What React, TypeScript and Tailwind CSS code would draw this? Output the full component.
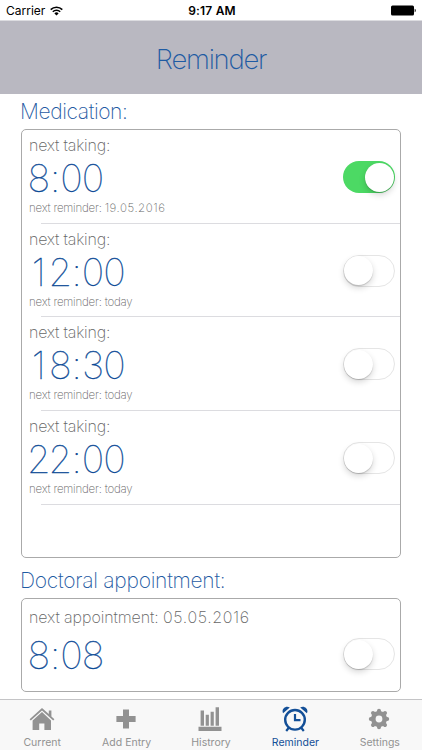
import { useState } from "react";

type Reminder = {
  time: string;
  next: string;
  enabled: boolean;
};

const reminders: Reminder[] = [
  { time: "8:00", next: "19.05.2016", enabled: true },
  { time: "12:00", next: "today", enabled: false },
  { time: "18:30", next: "today", enabled: false },
  { time: "22:00", next: "today", enabled: false },
];

const HomeIcon = () => (
  <svg width="26" height="24" viewBox="0 0 26 24" fill="currentColor">
    <path d="M13 1 0.6 12.2l1.2 1.3L13 3.4l11.2 10.1 1.2-1.3-3-2.7V3.4h-2.6v3.7z" />
    <path d="M13 5 3.6 13.6V23h6.6v-6.6h5.2V23H22v-9.4z" />
  </svg>
);

const PlusIcon = () => (
  <svg width="20" height="20" viewBox="0 0 20 20" fill="currentColor">
    <path d="M7 .4h6V7h6.6v6H13v6.6H7V13H.4V7H7z" />
  </svg>
);

const ChartIcon = () => (
  <svg width="24" height="24" viewBox="0 0 24 24" fill="currentColor">
    <path d="M.5 19.8h23V24H.5zM2.600 3.500h3.400v15.300H2.600zM7.700 7.800h3.200v11H7.700zM12.600 4.800h3.200v14h-3.200zM17.600.2h3.400v18.600h-3.400z" />
  </svg>
);

const AlarmIcon = () => (
  <svg width="26" height="26" viewBox="0 0 26 26" fill="none" stroke="currentColor">
    <circle cx="13" cy="13.8" r="9.800" strokeWidth="2.400" />
    <path d="M13 8v6.200h5.500M7 21.500 4.200 25M19 21.500l2.800 3.500" strokeWidth="2.200" />
    <path
      d="M1.100 7.300C-1 3.500 3.500-1.200 7.800 1.500zM24.900 7.300C27 3.500 22.500-1.200 18.200 1.500z"
      fill="currentColor"
      stroke="none"
    />
  </svg>
);

const GearIcon = () => (
  <svg width="22" height="22" viewBox="0 0 22 22" fill="none" stroke="currentColor">
    <circle cx="11" cy="11" r="5.700" strokeWidth="4.600" />
    <path
      d="M11 2.800v1M11 18.200v1M2.800 11h1M18.200 11h1M5 5l.8.8M16.200 16.200l.8.8M5 17l.8-.8M16.200 5.800l.8-.8"
      strokeWidth="4"
      strokeLinecap="round"
    />
  </svg>
);

const tabs = [
  { name: "Current", Icon: HomeIcon },
  { name: "Add Entry", Icon: PlusIcon },
  { name: "Histrory", Icon: ChartIcon },
  { name: "Reminder", Icon: AlarmIcon },
  { name: "Settings", Icon: GearIcon },
];

const Switch = ({ defaultOn }: { defaultOn: boolean }) => {
  const [on, setOn] = useState(defaultOn);

  return (
    <button
      role="switch"
      aria-checked={on}
      aria-label="Toggle reminder"
      onClick={() => setOn(!on)}
      className={`flex h-8 w-[52px] items-center rounded-full ${
        on
          ? "justify-end bg-[#4cd964] p-[1.5px]"
          : "justify-start border-[1.5px] border-[#e5e5e5] bg-white"
      }`}
    >
      <span className="h-[29px] w-[29px] rounded-full bg-white shadow-[0_3px_6px_rgba(0,0,0,0.16),0_1px_1px_rgba(0,0,0,0.16)]" />
    </button>
  );
};

// Every digit takes the same width, the colon half of it
const ClockTime = ({ time }: { time: string }) => (
  <p className="-ml-px flex text-[38px] leading-[42px] font-thin text-[#0b4a96] [-webkit-text-stroke:0.3px_#0b4a96]">
    {time.split("").map((char, i) => (
      <span
        key={i}
        className={`flex justify-center ${char === ":" ? "w-[11px]" : "w-[21.6px]"}`}
      >
        {char}
      </span>
    ))}
  </p>
);

const StatusBar = () => (
  <div className="flex h-[21px] items-center justify-between border-b border-[#dcdce0] px-[6px] text-black">
    <div className="flex w-[100px] items-center gap-[5px] pt-px text-[12px]">
      Carrier
      <svg width="13" height="10" viewBox="0 0 13 10" fill="none" stroke="currentColor" strokeWidth="1.600">
        <path d="M.7 3.600a8.300 8.300 0 0 1 11.600 0M2.800 5.800a5.300 5.300 0 0 1 7.400 0" />
        <path d="M6.500 9.500 4.400 7.400a3 3 0 0 1 4.200 0z" fill="currentColor" stroke="none" />
      </svg>
    </div>
    <span className="pt-px pl-0.5 text-[12px] font-semibold tracking-[0.2px]">9:17 AM</span>
    <div className="flex w-[100px] justify-end">
      <svg width="25" height="11" viewBox="0 0 25 11" fill="currentColor">
        <rect x="0" y=".5" width="23" height="10" rx="1.500" />
        <path d="M23.700 3.700c1.400.5 1.400 3.100 0 3.600z" />
      </svg>
    </div>
  </div>
);

export default function App() {
  const [activeTab, setActiveTab] = useState("Reminder");

  return (
    <div className="flex h-[750px] w-[422px] flex-col overflow-hidden bg-white font-['Inter',sans-serif]">
      <StatusBar />
      <header className="flex h-[73px] items-center justify-center bg-[#b9b8c1] pt-1">
        <h1 className="text-[27.500px] font-extralight tracking-[-1.250px] text-[#1f5ba3]">
          Reminder
        </h1>
      </header>

      <main className="flex-1 px-[21px]">
        <h2 className="-ml-px flex h-[35px] items-center text-[21px] font-extralight tracking-[-0.400px] text-[#1f5ba3]">
          Medication:
        </h2>
        <section className="h-[429px] rounded-[5px] border border-[#aaa]">
          {reminders.map(({ time, next, enabled }) => (
            <div key={time} className="relative flex h-[93.700px] justify-between pr-[5px] pl-[7px]">
              <div className="flex flex-col">
                <p className="mt-1 text-[16px] leading-[22px] font-extralight tracking-[-0.200px] text-[#666]">
                  next taking:
                </p>
                <div className="mt-px">
                  <ClockTime time={time} />
                </div>
                <p className="text-[11.500px] leading-[18px] font-extralight tracking-[-0.220px] text-[#666]">
                  next reminder:{" "}
                  <span className={next === "today" ? "" : "tracking-[0.550px]"}>
                    {next}
                  </span>
                </p>
              </div>
              <div className="pt-[31px]">
                <Switch defaultOn={enabled} />
              </div>
              <div className="absolute right-0 bottom-0 left-[19px] h-px bg-[#dcdce0]" />
            </div>
          ))}
        </section>

        <h2 className="-ml-px flex h-10 items-center pt-[5px] text-[21px] font-extralight tracking-[-0.270px] text-[#1f5ba3]">
          Doctoral appointment:
        </h2>
        <section className="flex h-[94px] justify-between rounded-[5px] border border-[#aaa] pr-[5px] pl-[7px]">
          <div>
            <p className="mt-[7px] text-[16px] leading-[22px] font-extralight tracking-[-0.080px] text-[#666]">
              next appointment: <span className="tracking-[0.650px]">05.05.2016</span>
            </p>
            <div className="mt-[6px]">
              <ClockTime time="8:08" />
            </div>
          </div>
          <div className="pt-[39px]">
            <Switch defaultOn={false} />
          </div>
        </section>
      </main>

      <nav className="grid h-[51px] grid-cols-5 border-t border-[#c4c4c6] bg-[#f8f8f8]">
        {tabs.map(({ name, Icon }) => (
          <button
            key={name}
            onClick={() => setActiveTab(name)}
            className={`flex flex-col items-center text-[10.500px] leading-[14px] ${
              activeTab === name ? "text-[#134f97]" : "text-[#929292]"
            }`}
          >
            <span className="flex h-[36px] items-center justify-center pt-0.5 pr-px">
              <Icon />
            </span>
            {name}
          </button>
        ))}
      </nav>
    </div>
  );
}
